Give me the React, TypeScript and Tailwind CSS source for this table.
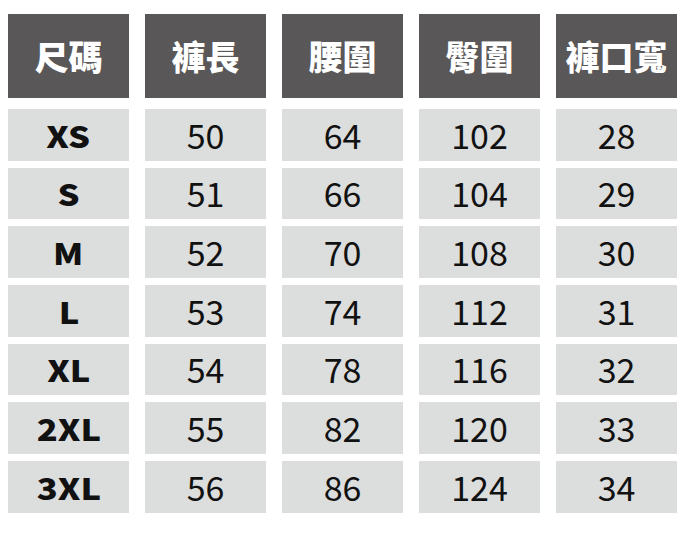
import React from "react";

const headers = ["尺碼", "褲長", "腰圍", "臀圍", "褲口寬"];
const rows = [
  ["XS", "50", "64", "102", "28"],
  ["S", "51", "66", "104", "29"],
  ["M", "52", "70", "108", "30"],
  ["L", "53", "74", "112", "31"],
  ["XL", "54", "78", "116", "32"],
  ["2XL", "55", "82", "120", "33"],
  ["3XL", "56", "86", "124", "34"],
];

const font = { fontFamily: '"Noto Sans CJK TC", "Noto Sans CJK SC", sans-serif' };

export default function App() {
  return (
    <div className="w-[686px] h-[533px] bg-white pl-[8px] pt-[14px]" style={font}>
      <div className="grid grid-cols-[repeat(5,121px)] gap-x-[16px] h-[84px]">
        {headers.map((h) => (
          <div
            key={h}
            className="bg-[#595757] text-white flex items-center justify-center text-[34px] font-black leading-none"
          >
            {h}
          </div>
        ))}
      </div>
      <div className="mt-[11px] grid grid-cols-[repeat(5,121px)] auto-rows-[51.67px] gap-x-[16px] gap-y-[7px]">
        {rows.map((r) =>
          r.map((c, i) => (
            <div
              key={r[0] + i}
              className="bg-[#dcdddd] text-[#111] flex items-center justify-center leading-none"
            >
              {i === 0 ? (
                <span className="inline-block text-[30px] font-black scale-x-[1.15]">{c}</span>
              ) : (
                <span className="text-[34px] font-normal">{c}</span>
              )}
            </div>
          ))
        )}
      </div>
    </div>
  );
}
